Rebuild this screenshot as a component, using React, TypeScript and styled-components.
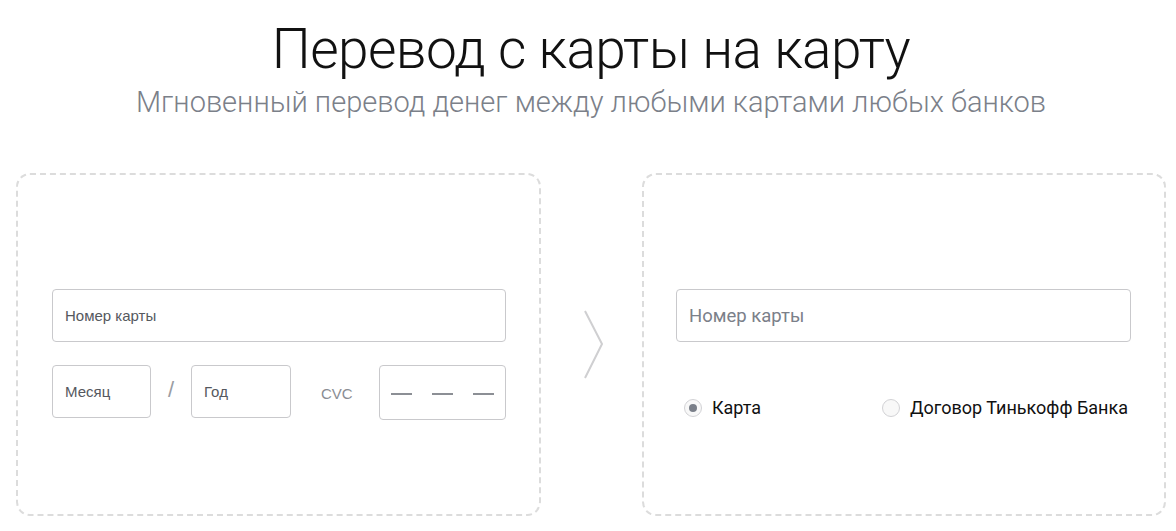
import React from "react";
import styled, { createGlobalStyle } from "styled-components";

const Global = createGlobalStyle`
  html, body { margin: 0; padding: 0; background: #fff; }
  body { font-family: "Roboto", "Liberation Sans", sans-serif; }
`;

const Page = styled.div`
  width: 1176px;
  height: 531px;
  overflow: hidden;
  display: flex;
  flex-direction: column;
  align-items: center;
`;

const Title = styled.h1`
  margin: 14px 0 0;
  font-family: "Roboto", sans-serif;
  font-weight: 300;
  font-size: 55px;
  line-height: 70px;
  color: #111;
  letter-spacing: -0.6px;
  padding-left: 6px;
`;

const Subtitle = styled.p`
  margin: 0;
  padding-left: 6px;
  font-family: "Roboto", sans-serif;
  font-weight: 300;
  font-size: 29px;
  line-height: 36px;
  color: #7b8089;
`;

const Row = styled.div`
  align-self: stretch;
  margin-top: 53px;
  padding: 0 10px 0 16px;
  display: grid;
  grid-template-columns: 525px 1fr 524px;
  align-items: center;
`;

const Card = styled.div<{ $padL: number; $padR: number }>`
  height: 343px;
  box-sizing: border-box;
  border: 2px dashed #dcdcdc;
  border-radius: 14px;
  padding: 114px ${(p) => p.$padR}px 0 ${(p) => p.$padL}px;
  display: flex;
  flex-direction: column;
`;

const Field = styled.div<{ $w?: number; $h?: number }>`
  box-sizing: border-box;
  width: ${(p) => (p.$w ? `${p.$w}px` : "100%")};
  height: ${(p) => p.$h ?? 53}px;
  border: 1px solid #c9c9cc;
  border-radius: 4px;
  display: flex;
  align-items: center;
  padding-left: 12px;
  font-family: "Liberation Sans", Arial, sans-serif;
  font-size: 15px;
  color: #55585e;
  flex-shrink: 0;
`;

const DateRow = styled.div`
  margin-top: 23px;
  display: flex;
  align-items: flex-start;
`;

const Slash = styled.span`
  width: 40px;
  height: 53px;
  display: flex;
  align-items: center;
  justify-content: center;
  font-family: "Liberation Sans", sans-serif;
  font-size: 22px;
  color: #9a9da3;
  padding-bottom: 4px;
  box-sizing: border-box;
`;

const CvcLabel = styled.span`
  height: 53px;
  display: flex;
  align-items: center;
  margin-left: 30px;
  width: 58px;
  font-family: "Liberation Sans", sans-serif;
  font-size: 15px;
  color: #8a8d93;
  padding-top: 3px;
  box-sizing: border-box;
`;

const Dashes = styled.div`
  display: flex;
  gap: 20px;
  margin-left: -1px;
`;

const Dash = styled.span`
  width: 21px;
  height: 2px;
  background: #8c8f95;
  margin-top: 2px;
`;

const ArrowBox = styled.div`
  display: flex;
  justify-content: center;
  padding-left: 4px;
  padding-top: 1px;
`;

const RightInput = styled(Field)`
  font-family: "Roboto", sans-serif;
  font-size: 18.5px;
  color: #7b8089;
`;

const Radios = styled.div`
  margin-top: 55px;
  display: flex;
  justify-content: space-between;
  padding: 0 3px 0 8px;
`;

const RadioItem = styled.label`
  display: flex;
  align-items: center;
  gap: 10px;
  font-family: "Roboto", sans-serif;
  font-size: 18px;
  color: #111;
`;

const RadioCircle = styled.span<{ $checked?: boolean }>`
  width: 18px;
  height: 18px;
  box-sizing: border-box;
  border-radius: 50%;
  border: 1px solid #d2d2d5;
  background: #f8f8f8;
  display: flex;
  align-items: center;
  justify-content: center;
  &::after {
    content: "";
    width: 8px;
    height: 8px;
    border-radius: 50%;
    background: ${(p) => (p.$checked ? "#7a7f89" : "transparent")};
  }
`;

export default function App() {
  return (
    <>
      <Global />
      <Page>
        <Title>Перевод с карты на карту</Title>
        <Subtitle>Мгновенный перевод денег между любыми картами любых банков</Subtitle>
        <Row>
          <Card $padL={34} $padR={33}>
            <Field>Номер карты</Field>
            <DateRow>
              <Field $w={99}>Месяц</Field>
              <Slash>/</Slash>
              <Field $w={100}>Год</Field>
              <CvcLabel>CVC</CvcLabel>
              <Field $w={127} $h={55}>
                <Dashes>
                  <Dash />
                  <Dash />
                  <Dash />
                </Dashes>
              </Field>
            </DateRow>
          </Card>
          <ArrowBox>
            <svg width="22" height="70" viewBox="0 0 22 70">
              <polyline points="2,1 19,34 2,68" fill="none" stroke="#cfcfd1" strokeWidth="2" />
            </svg>
          </ArrowBox>
          <Card $padL={32} $padR={33}>
            <RightInput>Номер карты</RightInput>
            <Radios>
              <RadioItem>
                <RadioCircle $checked />
                Карта
              </RadioItem>
              <RadioItem>
                <RadioCircle />
                Договор Тинькофф Банка
              </RadioItem>
            </Radios>
          </Card>
        </Row>
      </Page>
    </>
  );
}
